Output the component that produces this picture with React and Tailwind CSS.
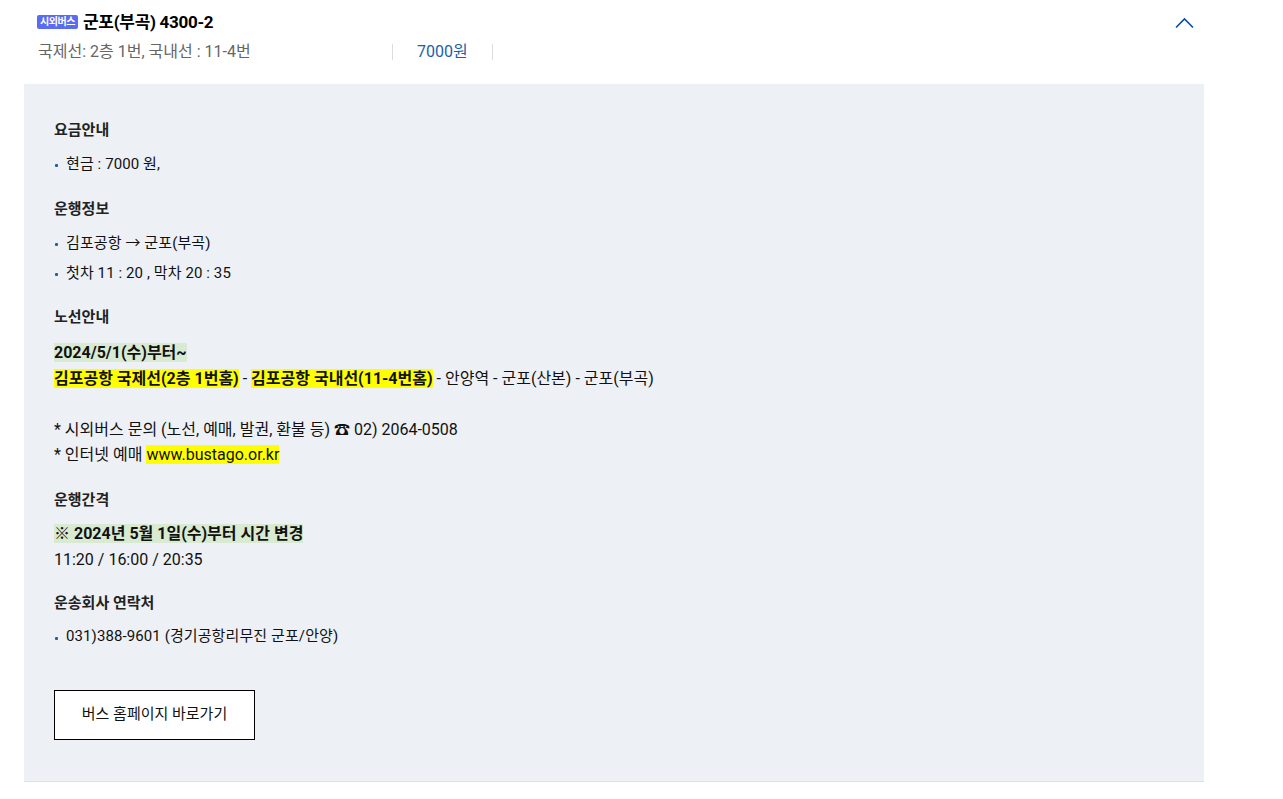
import React from "react";

const font = "font-['Roboto','Noto_Sans_CJK_KR',sans-serif]";

const Heading = ({ children, className = "" }) => (
  <h3 className={`text-[15px] leading-[22px] font-bold text-[#222] ${className}`}>
    {children}
  </h3>
);

const Bullet = ({ children }) => (
  <li className="flex items-center h-[30px] text-[15px] text-[#111] tracking-[0.1px]">
    <span className="w-[3px] h-[3px] rounded-[1px] bg-[#1a5fa8] ml-[1px] mr-[8px] mt-[3px]" />
    <span>{children}</span>
  </li>
);

export default function App() {
  return (
    <div className={`${font} bg-white min-h-screen`}>
      <div className="w-[1204px] pl-[24px]">
        {/* header */}
        <div className="h-[84px] pl-[13px] pr-[10px] relative">
          <div className="flex items-center pt-[10px] h-[33px]">
            <span className="inline-flex items-center justify-center h-[14px] w-[41px] rounded-[2px] bg-[#5a6cf0] text-white text-[10px] font-bold leading-none tracking-[-0.5px]">
              시외버스
            </span>
            <span className="ml-[5px] text-[17px] font-bold text-black leading-[22px] tracking-[-0.3px]">
              군포(부곡) 4300-2
            </span>
          </div>
          <div className="flex items-center mt-[9px] text-[16px] text-[#666] leading-[20px]">
            <span className="w-[355px] pl-[1px]">국제선: 2층 1번, 국내선 : 11-4번</span>
            <span className="w-px h-[16px] bg-[#dcdcdc]" />
            <span className="px-[24px] text-[#1a5fa8]">7000원</span>
            <span className="w-px h-[16px] bg-[#dcdcdc]" />
          </div>
          <svg
            className="absolute right-[10px] top-[17px]"
            width="19"
            height="12"
            viewBox="0 0 19 12"
            fill="none"
          >
            <polyline
              points="1,10.5 9.5,2 18,10.5"
              stroke="#0b4f9a"
              strokeWidth="1.6"
            />
          </svg>
        </div>

        {/* detail panel */}
        <div className="bg-[#edf0f5] border-b border-[#dde0e4] pl-[30px] pt-[35px] pb-[41px]">
          <Heading>요금안내</Heading>
          <ul className="mt-[8px]">
            <Bullet>현금 : 7000 원,</Bullet>
          </ul>

          <Heading className="mt-[19px]">운행정보</Heading>
          <ul className="mt-[8px]">
            <Bullet>김포공항 → 군포(부곡)</Bullet>
            <Bullet>첫차 11 : 20 , 막차 20 : 35</Bullet>
          </ul>

          <Heading className="mt-[18px]">노선안내</Heading>
          <div className="mt-[12px] text-[16px] leading-[25.5px] text-[#111]">
            <p>
              <b className="bg-[#d9ead3]">2024/5/1(수)부터~</b>
            </p>
            <p>
              <b className="bg-[#ffff00]">김포공항 국제선(2층 1번홈)</b> -{" "}
              <b className="bg-[#ffff00]">김포공항 국내선(11-4번홈)</b> - 안양역 -
              군포(산본) - 군포(부곡)
            </p>
            <p>&nbsp;</p>
            <p>* 시외버스 문의 (노선, 예매, 발권, 환불 등) ☎ 02) 2064-0508</p>
            <p>
              * 인터넷 예매 <span className="bg-[#ffff00]">www.bustago.or.kr</span>
            </p>
          </div>

          <Heading className="mt-[21px]">운행간격</Heading>
          <div className="mt-[10px] text-[16px] leading-[26px] text-[#111]">
            <p>
              <b className="bg-[#d9ead3]">※ 2024년 5월 1일(수)부터 시간 변경</b>
            </p>
            <p>11:20 / 16:00 / 20:35</p>
          </div>

          <Heading className="mt-[19px]">운송회사 연락처</Heading>
          <ul className="mt-[8px]">
            <Bullet>031)388-9601 (경기공항리무진 군포/안양)</Bullet>
          </ul>

          <button className="mt-[38px] w-[201px] h-[50px] border border-black bg-white text-[15px] text-[#111]">
            버스 홈페이지 바로가기
          </button>
        </div>
      </div>
    </div>
  );
}
